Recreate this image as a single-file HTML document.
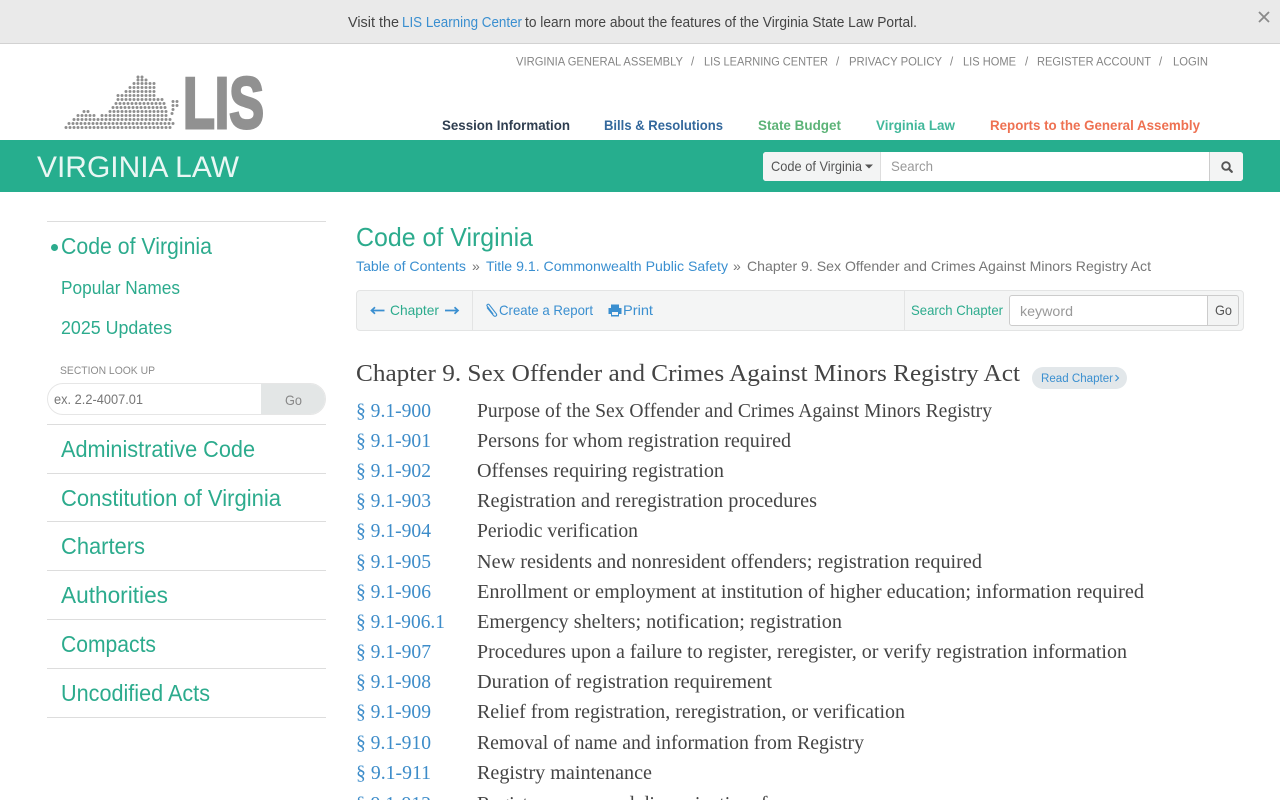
<!DOCTYPE html>
<html lang="en"><head><meta charset="utf-8"><title>Chapter 9. Sex Offender and Crimes Against Minors Registry Act</title>
<style>
html,body{margin:0;padding:0;width:1280px;height:800px;overflow:hidden;background:#fff}
.b{position:absolute;box-sizing:border-box}
svg{position:absolute;left:0;top:0}
text{font-family:"Liberation Sans",sans-serif;white-space:pre}
.s{font-family:"Liberation Serif",serif;font-size:20.5px;fill:#444}
.l{font-family:"Liberation Serif",serif;font-size:20.5px;fill:#3d8cc9}
.h{font-size:11.5px;fill:#858585}
.n{font-size:14px;font-weight:bold}
.g{fill:#2cab8d}
.u{fill:#3a8fd0}
.sd{font-size:23px;fill:#2cab8d}
.bc{font-size:14px;fill:#3a8fd0}
</style></head><body>
<div class="b" style="left:0;top:0;width:1280px;height:44px;background:#eaeaea;border-bottom:1px solid #d2d2d2"></div>
<div class="b" style="left:0;top:140px;width:1280px;height:52px;background:#26ae8e"></div>
<div class="b" style="left:763px;top:152px;width:480px;height:29px;background:#fff;border-radius:3px;overflow:hidden">
  <div class="b" style="left:0;top:0;width:118px;height:29px;background:#f3f4f4;border-right:1px solid #ddd"></div>
  <div class="b" style="left:446px;top:0;width:34px;height:29px;background:#f3f4f4;border-left:1px solid #ccc"></div>
</div>
<div class="b" style="left:47px;top:221px;width:279px;height:1px;background:#ddd"></div>
<div class="b" style="left:47px;top:424px;width:279px;height:1px;background:#ddd"></div>
<div class="b" style="left:47px;top:473px;width:279px;height:1px;background:#ddd"></div>
<div class="b" style="left:47px;top:521px;width:279px;height:1px;background:#ddd"></div>
<div class="b" style="left:47px;top:570px;width:279px;height:1px;background:#ddd"></div>
<div class="b" style="left:47px;top:619px;width:279px;height:1px;background:#ddd"></div>
<div class="b" style="left:47px;top:668px;width:279px;height:1px;background:#ddd"></div>
<div class="b" style="left:47px;top:717px;width:279px;height:1px;background:#ddd"></div>
<div class="b" style="left:47px;top:383px;width:279px;height:32px;border:1px solid #e6e6e6;border-radius:16px;overflow:hidden;background:#fff">
  <div class="b" style="left:213px;top:-1px;width:66px;height:32px;background:#e3e6e6"></div>
</div>
<div class="b" style="left:356px;top:290px;width:888px;height:41px;background:#f4f5f5;border:1px solid #e3e4e4;border-radius:4px"></div>
<div class="b" style="left:472px;top:291px;width:1px;height:39px;background:#e3e4e4"></div>
<div class="b" style="left:904px;top:291px;width:1px;height:39px;background:#e3e4e4"></div>
<div class="b" style="left:1009px;top:295px;width:199px;height:31px;background:#fff;border:1px solid #ccc;border-radius:3px 0 0 3px"></div>
<div class="b" style="left:1207px;top:295px;width:32px;height:31px;background:#f3f4f4;border:1px solid #ccc;border-radius:0 3px 3px 0"></div>
<div class="b" style="left:1032px;top:367px;width:95px;height:22px;background:#e2e7ea;border-radius:11px"></div>

<svg width="1280" height="800" viewBox="0 0 1280 800">
<!-- banner -->
<text x="348" y="27" font-size="14.5" fill="#444" textLength="51" lengthAdjust="spacingAndGlyphs">Visit the</text>
<text x="402" y="27" font-size="14.5" fill="#3a8fd0" textLength="120" lengthAdjust="spacingAndGlyphs">LIS Learning Center</text>
<text x="525" y="27" font-size="14.5" fill="#444" textLength="392" lengthAdjust="spacingAndGlyphs">to learn more about the features of the Virginia State Law Portal.</text>
<path d="M1259 12l10 10M1269 12l-10 10" stroke="#8a8a8a" stroke-width="1.800" fill="none"/>
<!-- top links -->
<text class="h" x="516" y="65.500" textLength="167" lengthAdjust="spacingAndGlyphs">VIRGINIA GENERAL ASSEMBLY</text>
<text class="h" x="691" y="65.500">/</text>
<text class="h" x="704" y="65.500" textLength="124" lengthAdjust="spacingAndGlyphs">LIS LEARNING CENTER</text>
<text class="h" x="836" y="65.500">/</text>
<text class="h" x="849" y="65.500" textLength="93" lengthAdjust="spacingAndGlyphs">PRIVACY POLICY</text>
<text class="h" x="950" y="65.500">/</text>
<text class="h" x="963" y="65.500" textLength="53" lengthAdjust="spacingAndGlyphs">LIS HOME</text>
<text class="h" x="1025" y="65.500">/</text>
<text class="h" x="1037" y="65.500" textLength="114" lengthAdjust="spacingAndGlyphs">REGISTER ACCOUNT</text>
<text class="h" x="1159" y="65.500">/</text>
<text class="h" x="1173" y="65.500" textLength="35" lengthAdjust="spacingAndGlyphs">LOGIN</text>
<!-- logo -->
<g stroke="#8f8f8f" stroke-width="3" stroke-linecap="round" stroke-dasharray="0 4" fill="none">
<path d="M66 127.500H174M69 123.500H174M74 119.500H174M78 115.500H98M102 115.500H168M84 111.500H92M110 111.500H168M113 107.500H168M116 103.500H168M118 99.500H166M118 95.500H158M126 91.500H158M130 87.500H158M134 83.500H158M138 80H148M138 77H146"/>
<path d="M173 101.500H178M173 105.500H178M173 109.500H176M172 113.500H176"/>
</g>
<text x="183" y="128" font-size="72" font-weight="bold" fill="#919191" stroke="#919191" stroke-width="3" textLength="81" lengthAdjust="spacingAndGlyphs">LIS</text>
<!-- nav -->
<text class="n" x="442" y="130" fill="#2f3e50" textLength="128" lengthAdjust="spacingAndGlyphs">Session Information</text>
<text class="n" x="604" y="130" fill="#33689c" textLength="119" lengthAdjust="spacingAndGlyphs">Bills &amp; Resolutions</text>
<text class="n" x="758" y="130" fill="#5cb377" textLength="83" lengthAdjust="spacingAndGlyphs">State Budget</text>
<text class="n" x="876" y="130" fill="#42b89b" textLength="79" lengthAdjust="spacingAndGlyphs">Virginia Law</text>
<text class="n" x="990" y="130" fill="#ee7152" textLength="210" lengthAdjust="spacingAndGlyphs">Reports to the General Assembly</text>
<!-- band -->
<text x="37" y="177" font-size="30" fill="#fff" fill-opacity=".9" textLength="202" lengthAdjust="spacingAndGlyphs">VIRGINIA LAW</text>
<text x="771" y="171" font-size="14" fill="#555" textLength="91" lengthAdjust="spacingAndGlyphs">Code of Virginia</text>
<path d="M865 164.500h8l-4 4z" fill="#555"/>
<text x="891" y="171" font-size="14" fill="#999" textLength="42" lengthAdjust="spacingAndGlyphs">Search</text>
<circle cx="1226" cy="166" r="3.800" fill="none" stroke="#555" stroke-width="1.900"/>
<path d="M1228.800 168.800l3 3" stroke="#555" stroke-width="2.200" stroke-linecap="round"/>
<!-- sidebar -->
<circle cx="54.500" cy="247.500" r="3.500" fill="#2cab8d"/>
<text class="sd" x="61" y="254" textLength="151" lengthAdjust="spacingAndGlyphs">Code of Virginia</text>
<text x="61" y="294" font-size="18.500" class="g" textLength="119" lengthAdjust="spacingAndGlyphs">Popular Names</text>
<text x="61" y="334" font-size="18.500" class="g" textLength="111" lengthAdjust="spacingAndGlyphs">2025 Updates</text>
<text x="60" y="374" font-size="11" fill="#8c8c8c" textLength="95" lengthAdjust="spacingAndGlyphs">SECTION LOOK UP</text>
<text x="54" y="404" font-size="14" fill="#777" textLength="89" lengthAdjust="spacingAndGlyphs">ex. 2.2-4007.01</text>
<text x="285" y="405" font-size="14" fill="#888" textLength="17" lengthAdjust="spacingAndGlyphs">Go</text>
<text class="sd" x="61" y="457" textLength="194" lengthAdjust="spacingAndGlyphs">Administrative Code</text>
<text class="sd" x="61" y="506" textLength="220" lengthAdjust="spacingAndGlyphs">Constitution of Virginia</text>
<text class="sd" x="61" y="554" textLength="84" lengthAdjust="spacingAndGlyphs">Charters</text>
<text class="sd" x="61" y="603" textLength="107" lengthAdjust="spacingAndGlyphs">Authorities</text>
<text class="sd" x="61" y="652" textLength="95" lengthAdjust="spacingAndGlyphs">Compacts</text>
<text class="sd" x="61" y="701" textLength="149" lengthAdjust="spacingAndGlyphs">Uncodified Acts</text>
<!-- main head -->
<text x="356" y="246" font-size="26" class="g" textLength="177" lengthAdjust="spacingAndGlyphs">Code of Virginia</text>
<text class="bc" x="356" y="271" textLength="110" lengthAdjust="spacingAndGlyphs">Table of Contents</text>
<text x="472" y="271" font-size="14" fill="#777">»</text>
<text class="bc" x="486" y="271" textLength="242" lengthAdjust="spacingAndGlyphs">Title 9.1. Commonwealth Public Safety</text>
<text x="733" y="271" font-size="14" fill="#777">»</text>
<text x="747" y="271" font-size="14" fill="#777" textLength="404" lengthAdjust="spacingAndGlyphs">Chapter 9. Sex Offender and Crimes Against Minors Registry Act</text>
<!-- toolbar -->
<path d="M371.500 310.500h13M375 307.300l-3.500 3.200 3.500 3.200" fill="none" stroke="#3a8fd0" stroke-width="1.700"/>
<text x="390" y="315" font-size="14" class="g" textLength="49" lengthAdjust="spacingAndGlyphs">Chapter</text>
<path d="M445 310.500h13M454.500 307.300l3.500 3.200-3.500 3.200" fill="none" stroke="#3a8fd0" stroke-width="1.700"/>
<path d="M487 307.500l6.500 8c1.600 1.800 4 .2 2.800-1.700l-7-9c-1-1.200-3-.2-2.200 1.300l6 8" fill="none" stroke="#3a8fd0" stroke-width="1.100"/>
<text class="u" x="499" y="315" font-size="14" textLength="94" lengthAdjust="spacingAndGlyphs">Create a Report</text>
<path d="M611 304.500h8v3.500h-8zM608.500 308h13v6h-2.500v2.500h-8V314h-2.500z" fill="#3a8fd0"/>
<rect x="612" y="312" width="6" height="3" fill="#f4f5f5"/>
<text class="u" x="623" y="315" font-size="14" textLength="30" lengthAdjust="spacingAndGlyphs">Print</text>
<text x="911" y="315" font-size="14" class="g" textLength="92" lengthAdjust="spacingAndGlyphs">Search Chapter</text>
<text x="1020" y="316" font-size="14" fill="#999" textLength="53" lengthAdjust="spacingAndGlyphs">keyword</text>
<text x="1215" y="315" font-size="14" fill="#555" textLength="17" lengthAdjust="spacingAndGlyphs">Go</text>
<!-- heading -->
<text x="356" y="381" style="font-family:'Liberation Serif',serif" font-size="24.500" fill="#444" textLength="664" lengthAdjust="spacingAndGlyphs">Chapter 9. Sex Offender and Crimes Against Minors Registry Act</text>
<text x="1041" y="382" font-size="11.500" fill="#3a8fd0" textLength="72" lengthAdjust="spacingAndGlyphs">Read Chapter</text>
<path d="M1115.500 375l3 3-3 3" fill="none" stroke="#3a8fd0" stroke-width="1.100"/>
<!-- sections -->
<text class="l" x="356" y="417" textLength="75" lengthAdjust="spacingAndGlyphs">§ 9.1-900</text><text class="s" x="477" y="417" textLength="515" lengthAdjust="spacingAndGlyphs">Purpose of the Sex Offender and Crimes Against Minors Registry</text>
<text class="l" x="356" y="447" textLength="75" lengthAdjust="spacingAndGlyphs">§ 9.1-901</text><text class="s" x="477" y="447" textLength="314" lengthAdjust="spacingAndGlyphs">Persons for whom registration required</text>
<text class="l" x="356" y="477" textLength="75" lengthAdjust="spacingAndGlyphs">§ 9.1-902</text><text class="s" x="477" y="477" textLength="247" lengthAdjust="spacingAndGlyphs">Offenses requiring registration</text>
<text class="l" x="356" y="507" textLength="75" lengthAdjust="spacingAndGlyphs">§ 9.1-903</text><text class="s" x="477" y="507" textLength="340" lengthAdjust="spacingAndGlyphs">Registration and reregistration procedures</text>
<text class="l" x="356" y="537" textLength="75" lengthAdjust="spacingAndGlyphs">§ 9.1-904</text><text class="s" x="477" y="537" textLength="161" lengthAdjust="spacingAndGlyphs">Periodic verification</text>
<text class="l" x="356" y="568" textLength="75" lengthAdjust="spacingAndGlyphs">§ 9.1-905</text><text class="s" x="477" y="568" textLength="505" lengthAdjust="spacingAndGlyphs">New residents and nonresident offenders; registration required</text>
<text class="l" x="356" y="598" textLength="75" lengthAdjust="spacingAndGlyphs">§ 9.1-906</text><text class="s" x="477" y="598" textLength="667" lengthAdjust="spacingAndGlyphs">Enrollment or employment at institution of higher education; information required</text>
<text class="l" x="356" y="628" textLength="89" lengthAdjust="spacingAndGlyphs">§ 9.1-906.1</text><text class="s" x="477" y="628" textLength="365" lengthAdjust="spacingAndGlyphs">Emergency shelters; notification; registration</text>
<text class="l" x="356" y="658" textLength="75" lengthAdjust="spacingAndGlyphs">§ 9.1-907</text><text class="s" x="477" y="658" textLength="650" lengthAdjust="spacingAndGlyphs">Procedures upon a failure to register, reregister, or verify registration information</text>
<text class="l" x="356" y="688" textLength="75" lengthAdjust="spacingAndGlyphs">§ 9.1-908</text><text class="s" x="477" y="688" textLength="295" lengthAdjust="spacingAndGlyphs">Duration of registration requirement</text>
<text class="l" x="356" y="718" textLength="75" lengthAdjust="spacingAndGlyphs">§ 9.1-909</text><text class="s" x="477" y="718" textLength="428" lengthAdjust="spacingAndGlyphs">Relief from registration, reregistration, or verification</text>
<text class="l" x="356" y="749" textLength="75" lengthAdjust="spacingAndGlyphs">§ 9.1-910</text><text class="s" x="477" y="749" textLength="387" lengthAdjust="spacingAndGlyphs">Removal of name and information from Registry</text>
<text class="l" x="356" y="779" textLength="75" lengthAdjust="spacingAndGlyphs">§ 9.1-911</text><text class="s" x="477" y="779" textLength="175" lengthAdjust="spacingAndGlyphs">Registry maintenance</text>
<text class="l" x="356" y="810" textLength="75" lengthAdjust="spacingAndGlyphs">§ 9.1-912</text><text class="s" x="477" y="810" textLength="316" lengthAdjust="spacingAndGlyphs">Registry access and dissemination; fees</text>
</svg>
</body></html>
